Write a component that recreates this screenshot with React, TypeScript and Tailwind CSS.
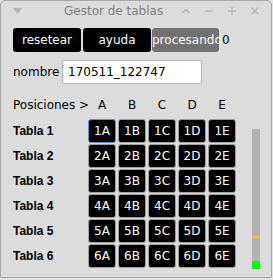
import { ChevronUp, Minus, Plus, X } from 'lucide-react';

const cols = ['A', 'B', 'C', 'D', 'E'];
const rows = [1, 2, 3, 4, 5, 6];

const App = () => {
  return (
    <div className="h-[280px] w-[273px] bg-[#e4e4e4] font-['DejaVu_Sans',sans-serif] text-[12px] text-black">
      <div className="flex h-[278px] w-[272px] flex-col rounded-t-[5px] border border-[#a8a8a8] bg-[#dcdcdc]">
        {/* title bar */}
        <div className="flex h-[19px] items-center px-[12px] text-[#808080]">
          <svg width="9" height="6" viewBox="0 0 9 6" className="mt-[1px]">
            <path d="M0 0 H9 L4.5 6 Z" fill="#b4b4b4" />
          </svg>
          <span className="ml-[42px] text-[12px] leading-none">Gestor de tablas</span>
          <div className="ml-auto mr-[-2px] flex items-center gap-[11px] text-[#b4b4b4]">
            <ChevronUp className="h-3 w-3" strokeWidth={2.5} />
            <Minus className="h-3 w-3" strokeWidth={2.5} />
            <Plus className="h-3 w-3" strokeWidth={2.5} />
            <X className="h-3 w-3" strokeWidth={2.5} />
          </div>
        </div>

        <div className="flex flex-col pl-[12px] pt-[8px]">
          {/* buttons */}
          <div className="flex h-[24px] items-center">
            <button className="h-full w-[68px] rounded-[3px] bg-black text-white">resetear</button>
            <button className="ml-[2px] h-full w-[68px] rounded-[3px] bg-black text-white">ayuda</button>
            <button className="ml-[1px] h-full w-[67px] overflow-visible whitespace-nowrap rounded-[3px] bg-[#717171] text-left text-white">
              procesando
            </button>
            <span className="ml-[3px]">0</span>
          </div>

          {/* nombre */}
          <div className="mt-[8px] flex h-[24px] items-center">
            <span className="w-[49px] shrink-0">nombre</span>
            <div className="flex h-full w-[140px] items-center rounded-[2px] border border-[#b4b4b4] bg-white pl-[5px]">
              170511_122747
            </div>
          </div>

          {/* header */}
          <div className="mt-[9px] flex h-[24px] items-center">
            <span className="w-[75px] shrink-0 whitespace-nowrap">Posiciones &gt;</span>
            <div className="flex gap-[2px]">
              {cols.map((c) => (
                <span key={c} className="w-[28px] text-center">
                  {c}
                </span>
              ))}
            </div>
          </div>

          {/* tables + meter */}
          <div className="mt-[2px] flex">
            <div className="flex flex-col gap-[1px]">
              {rows.map((r) => (
                <div key={r} className="flex h-[24px] items-center">
                  <span className="w-[75px] shrink-0 font-['Liberation_Sans',sans-serif] text-[12px] font-bold">Tabla {r}</span>
                  <div className="flex h-full gap-[2px]">
                    {cols.map((c) => (
                      <div
                        key={c}
                        className={
                          r === 1 && c === 'A'
                            ? 'flex h-full w-[28px] items-center justify-center rounded-[3px] border border-[#5b8fd2] bg-black text-white'
                            : 'flex h-full w-[28px] items-center justify-center rounded-[3px] border border-[#a0a0a0] bg-black text-white'
                        }
                      >
                        {r}
                        {c}
                      </div>
                    ))}
                  </div>
                </div>
              ))}
            </div>

            <div className="ml-[16px] mt-[10px] flex h-[140px] w-[8px] flex-col bg-[#b3b3b3]">
              <div className="flex-1" />
              <div className="h-[2px] bg-[#ffc20e]" />
              <div className="h-[23px]" />
              <div className="h-[8px] bg-[#00ff00]" />
            </div>
          </div>
        </div>
      </div>
    </div>
  );
};

export default App;
